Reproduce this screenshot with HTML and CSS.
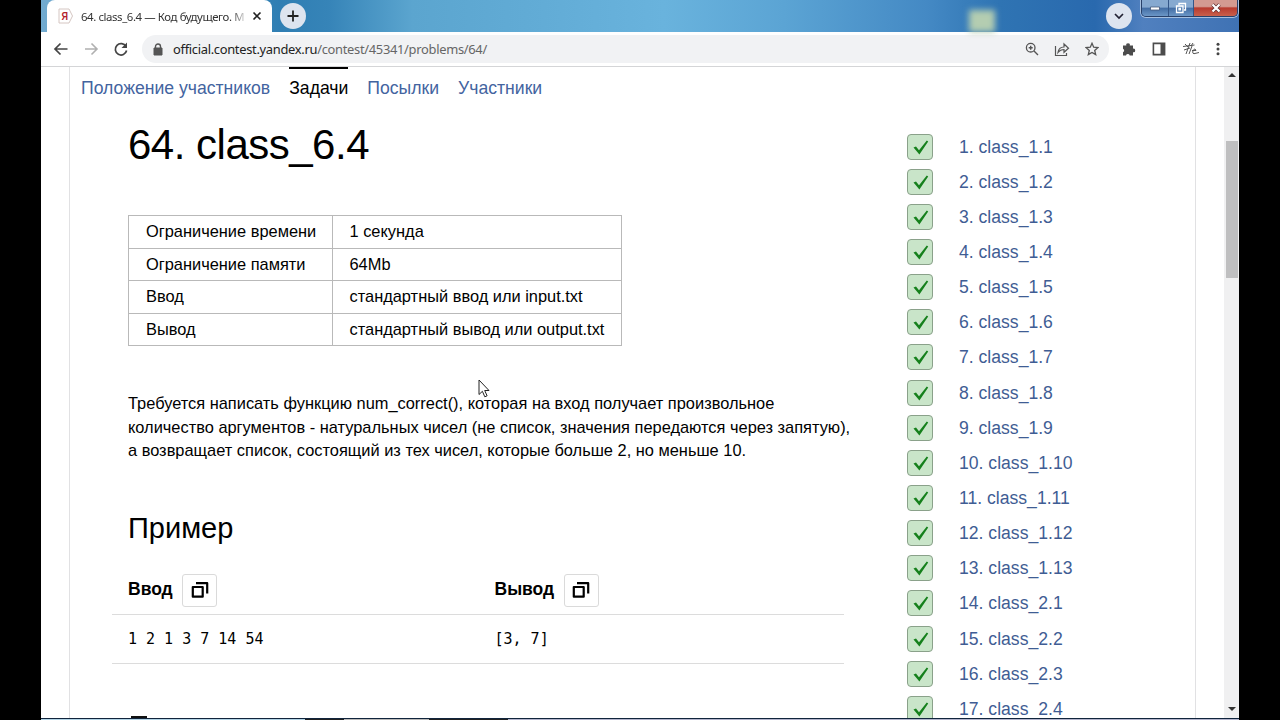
FILE: index.html
```html
<!DOCTYPE html>
<html lang="ru">
<head>
<meta charset="utf-8">
<title>64. class_6.4 — Код будущего</title>
<link rel="stylesheet" href="styles.css">
</head>
<body>
<svg class="defs" width="0" height="0">
  <symbol id="check" viewBox="0 0 26 26"><path d="M6.500 13.600 9 12.400 12 16.200 19.800 6.600 21.200 7.400 12.400 20.400Z" fill="#15801c"/></symbol>
  <symbol id="copy" viewBox="0 0 18 18"><path d="M1.800 6h9.900v9.700H1.800z M5 2.200h11.200v10.300" fill="none" stroke="#000" stroke-width="2.200" stroke-linejoin="round"/></symbol>
</svg>
<div class="screen">
  <header class="tabstrip">
    <div class="tab">
      <svg class="favicon" width="16" height="16" viewBox="0 0 16 16"><path d="M1 1h10l3.500 7-3.500 7H1z" fill="#fff" stroke="#d5c6c2"/><text x="3.500" y="12" textLength="6.500" lengthAdjust="spacingAndGlyphs">Я</text></svg>
      <span class="tab-title">64. class_6.4 — Код будущего. М</span>
      <svg width="10" height="10" viewBox="0 0 10 10"><path d="m1.500 1.500 7 7m0-7-7 7" stroke="#222" stroke-width="1.600"/></svg>
    </div>
    <div class="round plus"><svg width="14" height="14" viewBox="0 0 14 14"><path d="M7 1.500v11M1.500 7h11" stroke="#222" stroke-width="1.800"/></svg></div>
    <div class="glow"></div>
    <div class="round"><svg width="12" height="12" viewBox="0 0 12 12"><path d="m2 4 4 4 4-4" fill="none" stroke="#223" stroke-width="1.700"/></svg></div>
    <div class="winbtns">
      <div class="wb min"><svg width="12" height="8" viewBox="0 0 12 8"><path d="M1.500 3h9v3h-9z" fill="#fff" stroke="#44587a" stroke-width=".8"/></svg></div>
      <div class="wb max"><svg width="12" height="12" viewBox="0 0 12 12"><path d="M4 3V1.500h6.500V8H9M1.500 4H8v6.500H1.500zM4 6.300h1.500v1.600H4z" fill="none" stroke="#fff" stroke-width="1.300"/></svg></div>
      <div class="wb close"><svg width="12" height="10" viewBox="0 0 12 10"><path d="m2.500 1.500 7 7m0-7-7 7" stroke="#5b2a2a" stroke-width="3.600"/><path d="m2.500 1.500 7 7m0-7-7 7" stroke="#fff" stroke-width="2.300"/></svg></div>
    </div>
  </header>
  <div class="toolbar">
    <svg width="16" height="16" viewBox="0 0 16 16"><path d="M14.500 8H2.500M7.500 2.500 2 8l5.500 5.500" fill="none" stroke="#444" stroke-width="1.700"/></svg>
    <svg width="16" height="16" viewBox="0 0 16 16"><path d="M2 8h11.500M8.500 2.500 14 8l-5.500 5.500" fill="none" stroke="#b0b0b0" stroke-width="1.600"/></svg>
    <svg width="16" height="16" viewBox="0 0 16 16"><path d="M13 5.500A5.700 5.700 0 1 0 13.600 9.500" fill="none" stroke="#444" stroke-width="1.700"/><path d="M14 1.500V7H8.500z" fill="#444"/></svg>
    <div class="omnibox">
      <svg width="10" height="13" viewBox="0 0 10 13"><path d="M1 5h8v7H1z" fill="#555" stroke="#555" stroke-linejoin="round"/><path d="M2.500 5V3.500a2.500 2.500 0 0 1 5 0V5" fill="none" stroke="#555" stroke-width="1.400"/></svg>
      <span class="url">official.contest.yandex.ru<i>/contest/45341/problems/64/</i></span>
      <svg width="14" height="14" viewBox="0 0 14 14"><circle cx="5.700" cy="5.700" r="4.300" fill="none" stroke="#555" stroke-width="1.300"/><path d="m9 9 4 4M3.700 5.700h4M5.700 3.700v4" stroke="#555" stroke-width="1.400"/></svg>
      <svg width="16" height="15" viewBox="0 0 16 15"><path d="M1.500 4v9.500h11V11M4 10.500c.5-4 2.500-5.500 6-5.500V2l4.500 4.200L10 10.300V7.500c-3 0-4.500 1-6 3z" fill="none" stroke="#555" stroke-width="1.200"/></svg>
      <svg width="14" height="14" viewBox="0 0 14 14"><path d="m7 1.300 1.700 3.900 4.200.4-3.200 2.800 1 4.200L7 10.400l-3.700 2.200 1-4.200L1.100 5.600l4.200-.4z" fill="none" stroke="#555" stroke-width="1.300"/></svg>
    </div>
    <div class="ext">
      <svg width="14" height="14" viewBox="0 0 14 14"><path d="M1 3.500h3.300a1.800 1.800 0 1 1 3.500 0H11v3.200a1.800 1.800 0 1 1 0 3.500V13.500H7.700a1.900 1.900 0 0 0-3.700 0H1V10.200a1.900 1.900 0 0 0 0-3.500z" fill="#4c4c4c"/></svg>
      <svg width="14" height="14" viewBox="0 0 14 14"><path d="M1.400 1.400h11.200v11.200H1.400z" fill="#fff" stroke="#4c4c4c" stroke-width="1.600"/><path d="M8.500 1.400h4.500v11.200H8.500z" fill="#4c4c4c"/></svg>
      <svg width="18" height="14" viewBox="0 0 18 14"><path d="M1 4.500 12.500 3M3 2l3 3M8 1 4 12M2 8l6-2M10 4 7 12M11 1 9 4M10 8.500h4l-1-1.500c-2 0-3.500 4.500-1 4.700l5-1.200" fill="none" stroke="#555" stroke-width="1"/></svg>
      <svg width="4" height="14" viewBox="0 0 4 14"><circle cx="2" cy="2.200" r="1.500"/><circle cx="2" cy="7" r="1.500"/><circle cx="2" cy="11.800" r="1.500"/></svg>
    </div>
  </div>
  <div class="viewport">
    <div class="page">
      <nav class="nav"><a>Положение участников</a><a class="active">Задачи</a><a>Посылки</a><a>Участники</a></nav>
      <div class="columns">
        <main class="problem">
          <h1>64. class_6.4</h1>
          <table class="limits">
            <tr><td>Ограничение времени</td><td>1 секунда</td></tr>
            <tr><td>Ограничение памяти</td><td>64Mb</td></tr>
            <tr><td>Ввод</td><td>стандартный ввод или input.txt</td></tr>
            <tr><td>Вывод</td><td>стандартный вывод или output.txt</td></tr>
          </table>
          <p class="legend">Требуется написать функцию num_correct(), которая на вход получает произвольное<br>количество аргументов - натуральных чисел (не список, значения передаются через запятую),<br>а возвращает список, состоящий из тех чисел, которые больше 2, но меньше 10.</p>
          <h2>Пример</h2>
          <div class="sample">
            <div class="sample-row head">
              <div><b>Ввод</b><span class="copy"><svg width="18" height="18"><use href="#copy"/></svg></span></div>
              <div><b>Вывод</b><span class="copy"><svg width="18" height="18"><use href="#copy"/></svg></span></div>
            </div>
            <div class="sample-row data"><div>1 2 1 3 7 14 54</div><div>[3, 7]</div></div>
          </div>
          <div class="next-heading"></div>
        </main>
        <ul class="problems" id="problems"></ul>
      </div>
    </div>
    <div class="scrollbar"><i class="up"></i><div class="thumb"></div><i class="down"></i></div>
  </div>
  <footer class="taskbar"></footer>
  <svg class="cursor" width="13" height="20" viewBox="0 0 13 20"><path d="M1 1v14.500l3.400-3.200 2.400 5.500 2.300-1-2.400-5.300H11z" fill="#fff" stroke="#222" stroke-width="1"/></svg>
</div>
<script src="list.js"></script>
</body>
</html>
```
FILE: list.js
```js
const names = ["1.1","1.2","1.3","1.4","1.5","1.6","1.7","1.8","1.9","1.10","1.11","1.12","1.13","2.1","2.2","2.3","2.4"];
document.getElementById("problems").innerHTML = names.map((n, i) =>
  `<li><span class="ok"><svg width="26" height="26"><use href="#check"/></svg></span><a>${i + 1}. class_${n}</a></li>`).join("");
```
FILE: styles.css
```css
* { box-sizing: border-box; }
body { margin: 0; background: #000; font-family: "Liberation Sans", Arial, sans-serif; height: 720px; overflow: hidden; }
svg { display: block; flex: none; }
.defs { position: absolute; }
.screen { position: relative; width: 1198px; height: 720px; margin-left: 41px; background: #fff; display: flex; flex-direction: column; overflow: hidden; }
.tabstrip { height: 32px; flex: none; display: flex; align-items: center; background: linear-gradient(90deg, #72abd0 0, #2f7eb3 20%, #3684b8 24%, #5ba5cf 31%, #62acd6 42%, #69b3dd 52%, #5ba4d4 62%, #4489c4 74%, #2f74b3 80%, #2969ae 88%, #5080bf 92%, #3f72b4 100%); }
.tab { width: 225px; height: 32px; margin-left: 6px; background: #fff; border-radius: 8px 8px 0 0; display: flex; align-items: center; padding: 0 10px 0 11px; }
.favicon text { font: bold 11px "Liberation Sans", sans-serif; fill: #b3222e; }
.tab-title { width: 165px; margin: 0 7px 0 7px; white-space: nowrap; font: 11.400px "Noto Sans", sans-serif; letter-spacing: -.4px; color: #333; -webkit-mask-image: linear-gradient(90deg, #000 150px, transparent 167px); mask-image: linear-gradient(90deg, #000 150px, transparent 167px); }
.round { width: 26px; height: 26px; border-radius: 50%; background: #dde4ef; display: flex; align-items: center; justify-content: center; }
.plus { margin-left: 8px; }
.glow { width: 26px; height: 22px; margin: 10px 111px 0 663px; background: #b4cdb1; filter: blur(3px); }
.winbtns { display: flex; align-self: flex-start; height: 17px; margin-left: 9px; border: 1px solid #28416a; border-top: 0; border-radius: 0 0 5px 5px; overflow: hidden; box-shadow: 0 0 0 1px #a5bfdf; }
.wb { display: flex; align-items: center; justify-content: center; border-right: 1px solid #345688; background: linear-gradient(#86a9d0 0 45%, #426da4 50%, #6b96c6); }
.min { width: 27px; }
.max { width: 25px; }
.close { width: 43px; border: 0; background: linear-gradient(#d39a91 0 40%, #b83b2f 50%, #c9604c); }
.toolbar { height: 35px; flex: none; display: flex; align-items: center; border-bottom: 1px solid #d4d5d7; padding-left: 12px; }
.toolbar > svg { margin-right: 14px; }
.toolbar > svg:nth-child(3) { margin-right: 13px; }
.omnibox { width: 967px; height: 28px; border-radius: 14px; background: #f1f2f4; display: flex; align-items: center; padding: 0 10px 0 11px; gap: 15px; }
.url { flex: 1; margin-left: -5px; font: 12.900px "Noto Sans", sans-serif; letter-spacing: -.3px; color: #222; white-space: nowrap; }
.url i { font-style: normal; color: #666; }
.ext { display: flex; align-items: center; gap: 16px; margin-left: 13px; fill: #444; }
.viewport { height: 651px; flex: none; display: flex; overflow: hidden; }
.page { width: 1127px; margin-left: 28px; border: solid #e1e1e3; border-width: 0 1px; }
.nav { height: 41px; display: flex; padding-left: 11px; gap: 19px; font-size: 17.620px; line-height: 39px; color: #43649f; white-space: nowrap; }
.nav a { border-top: 2px solid transparent; height: 41px; }
.nav .active { color: #000; border-color: #000; }
.columns { display: flex; }
.problem { width: 837px; flex: none; }
h1 { margin: 7px 0 0 58px; font-size: 42px; letter-spacing: -.5px; font-weight: 400; line-height: 60px; height: 100px; }
.limits { border-collapse: collapse; margin-left: 58px; width: 494px; height: 131px; font-size: 16.400px; table-layout: fixed; }
.limits td { border: 1px solid #b9b9b9; padding: 0 0 0 16.500px; height: 32.600px; white-space: nowrap; }
.limits td:first-child { width: 204px; padding-left: 17px; }
.legend { margin: 46px 0 0 58px; font-size: 16.400px; line-height: 23.500px; white-space: nowrap; }
h2 { margin: 47px 0 0 58px; font-size: 29px; font-weight: 400; line-height: 36px; }
.sample { width: 732px; margin: 20px 0 0 42px; }
.sample-row { display: flex; border-bottom: 1px solid #dcdcdc; padding-left: 16px; }
.sample-row > div { width: 366.500px; flex: none; display: flex; align-items: center; }
.sample-row > div:last-child { width: 349px; }
.head { height: 49px; font-size: 17.500px; }
.head b { margin-top: -1px; }
.copy { width: 35px; height: 33px; margin: 1px 0 0 9.500px; border: 1px solid #dadada; border-radius: 3px; display: flex; align-items: center; justify-content: center; }
.data { height: 49px; font: 15px "DejaVu Sans Mono", monospace; white-space: pre; }
.next-heading { width: 16px; height: 2px; margin: 52px 0 0 61px; background: #111; }
.problems { list-style: none; margin: 21px 0 0; padding: 0; font-size: 17.600px; color: #3f5d94; }
.problems li { display: flex; align-items: center; height: 35.150px; gap: 26px; white-space: nowrap; }
.problems a { margin-top: 1px; }
.ok { width: 26px; height: 26px; border: 1px solid #8aa18a; border-radius: 4px; background: #c9e5c9; display: flex; align-items: center; justify-content: center; }
.scrollbar { margin-left: auto; width: 15px; height: 651px; background: #f0f0f1; display: flex; flex-direction: column; align-items: center; }
.up, .down { border: 4px solid transparent; width: 0; height: 0; }
.up { border-top: 0; border-bottom-color: #333; margin-top: 6px; }
.down { border-bottom: 0; border-top-color: #333; margin: auto 0 7px; }
.thumb { width: 12px; height: 137px; margin-top: 64px; background: #bfbfc0; }
.taskbar { height: 2px; border-top: 1px solid #10243c; background: linear-gradient(90deg, #b2d3e5 264px, #222 264px 303px, #b9b9b9 303px 388px, #222 388px 467px, #b2b4cc 467px); }
.cursor { position: absolute; left: 437px; top: 379px; }
```
